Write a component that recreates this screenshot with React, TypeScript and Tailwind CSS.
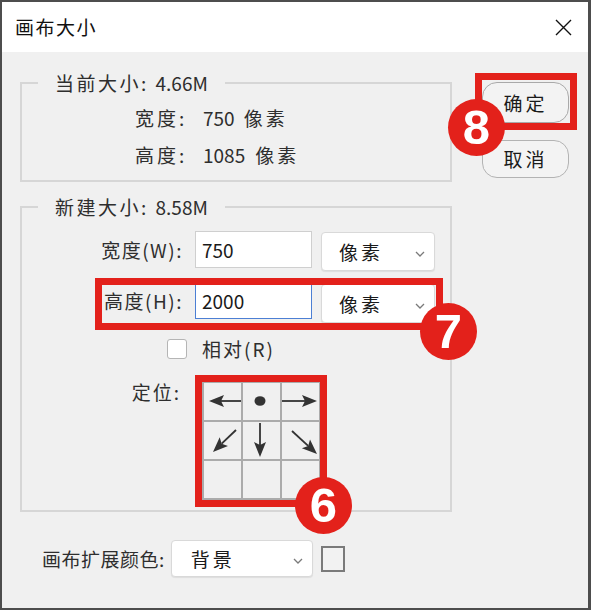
import React from "react"

function Arrow({ x1, y1, x2, y2 }: { x1: number; y1: number; x2: number; y2: number }) {
  const dx = x2 - x1
  const dy = y2 - y1
  const len = Math.hypot(dx, dy)
  const ux = dx / len
  const uy = dy / len
  const L = 15
  const W = 6
  const bx = x2 - ux * L
  const by = y2 - uy * L
  const nx = bx + ux * 3
  const ny = by + uy * 3
  const pts = `${x2},${y2} ${bx - uy * W},${by + ux * W} ${nx},${ny} ${bx + uy * W},${by - ux * W}`
  return (
    <svg width="37" height="37" viewBox="0 0 37 37">
      <line x1={x1} y1={y1} x2={nx} y2={ny} stroke="#333" strokeWidth="1.8" />
      <polygon points={pts} fill="#333" />
    </svg>
  )
}

const cells = [
  <Arrow key="l" x1={37} y1={18} x2={5} y2={18} />,
  <svg key="c" width="37" height="37" viewBox="0 0 37 37">
    <ellipse cx="17" cy="18" rx="5.5" ry="4.8" fill="#333" />
  </svg>,
  <Arrow key="r" x1={0} y1={18} x2={35} y2={18} />,
  <Arrow key="dl" x1={32} y1={8} x2={9} y2={30} />,
  <Arrow key="d" x1={17} y1={1} x2={17} y2={35} />,
  <Arrow key="dr" x1={10} y1={9} x2={35} y2={32} />,
  null,
  null,
  null,
]

function Chevron() {
  return (
    <svg width="10" height="6" viewBox="0 0 10 6" className="mt-[4px]">
      <path d="M1 1 L5 5 L9 1" fill="none" stroke="#7a7a7a" strokeWidth="1.3" />
    </svg>
  )
}

function Select({ value, className }: { value: string; className: string }) {
  return (
    <div
      className={`flex items-center justify-between bg-white border border-[#d9d9d9] rounded-[4px] shadow-[0_1px_1px_rgba(0,0,0,0.08)] pl-[17px] pr-[9px] ${className}`}
    >
      <span className="tracking-[3px] text-[#1a1a1a]">{value}</span>
      <Chevron />
    </div>
  )
}

function Badge({ n, className }: { n: string; className: string }) {
  return (
    <div
      className={`absolute w-[57px] h-[57px] rounded-full bg-[#e3211b] flex items-center justify-center text-white font-['Liberation_Sans',Arial,sans-serif] font-bold text-[49px] leading-none ${className}`}
    >
      {n}
    </div>
  )
}

export default function App() {
  return (
    <div className="relative w-[591px] h-[610px] overflow-hidden font-['Noto_Sans_CJK_SC',sans-serif] text-[19px] leading-[26px] text-[#2e2e2e]">
      <div className="flex flex-col w-full h-full border-2 border-r-[3px] border-[#4d4d4d] bg-[#f0f0f0]">
        <div className="h-[50px] shrink-0 bg-white flex items-center justify-between pl-[13px] pr-[16px]">
          <span className="tracking-[1.5px] text-[#111]">画布大小</span>
          <svg width="17" height="17" viewBox="0 0 17 17">
            <path d="M1 1 L16 16 M16 1 L1 16" stroke="#111" strokeWidth="1.4" />
          </svg>
        </div>

        <div className="flex">
          <div className="w-[450px] pl-[18px]">
            <fieldset className="mt-[18px] border-2 border-[#d6d6d6] pb-[7px]">
              <legend className="ml-[16px] px-[17px] tracking-[2.5px]">
                当前大小: <span className="tracking-normal">4.66M</span>
              </legend>
              <div className="pl-[113px] pt-[3px]">
                <div className="h-[37px] flex items-center">
                  <span className="w-[68px] tracking-[3px]">宽度:</span>
                  <span>750</span>
                  <span className="ml-[9px] tracking-[3px]">像素</span>
                </div>
                <div className="h-[37px] flex items-center">
                  <span className="w-[68px] tracking-[3px]">高度:</span>
                  <span>1085</span>
                  <span className="ml-[10px] tracking-[3px]">像素</span>
                </div>
              </div>
            </fieldset>

            <fieldset className="mt-[12px] border-2 border-[#d6d6d6] pb-[10px]">
              <legend className="ml-[16px] px-[17px] tracking-[2.5px]">
                新建大小: <span className="tracking-normal">8.58M</span>
              </legend>
              <div className="pt-[11px] flex flex-col">
                <div className="flex items-start gap-[12px]">
                  <span className="w-[161px] text-right mt-[6px] tracking-[1.5px]">宽度(W):</span>
                  <div className="w-[117px] h-[37px] bg-white border border-[#cfcfcf] flex items-center pl-[6px] text-[#1a1a1a]">
                    750
                  </div>
                  <Select value="像素" className="ml-[-3px] w-[114px] h-[39px] mt-[1px]" />
                </div>
                <div className="flex items-start gap-[12px] mt-[11px]">
                  <span className="w-[161px] text-right mt-[6px] tracking-[1.5px]">高度(H):</span>
                  <div className="w-[117px] h-[37px] bg-white border border-[#4c7fd4] flex items-center pl-[6px] text-[#1a1a1a]">
                    2000
                  </div>
                  <Select value="像素" className="ml-[-3px] w-[114px] h-[39px] mt-[2px]" />
                </div>
                <div className="flex items-center mt-[16px] pl-[145px] h-[20px]">
                  <div className="w-[20px] h-[20px] bg-white border border-[#b5b5b5] rounded-[3px]" />
                  <span className="ml-[15px] tracking-[2px]">相对(R)</span>
                </div>
                <div className="flex items-start gap-[19px] mt-[22px]">
                  <span className="w-[161px] text-right mt-[-2px] pr-[2px] tracking-[2px]">定位:</span>
                  <div className="grid grid-cols-[37px_37px_37px] gap-[2px] p-[2px] bg-[#ababab]">
                    {cells.map((c, i) => (
                      <div key={i} className="w-[37px] h-[37px] bg-[#f0f0f0]">
                        {c}
                      </div>
                    ))}
                  </div>
                </div>
              </div>
            </fieldset>
          </div>

          <div className="pl-[30px] pt-[30px] flex flex-col gap-[17px]">
            <button className="w-[87px] h-[41px] rounded-[15px] border border-[#a9a9a9] bg-[#f3f3f3] tracking-[3px] text-[#1a1a1a]">
              确定
            </button>
            <button className="w-[87px] h-[38px] rounded-[15px] border border-[#b3b3b3] bg-[#f3f3f3] tracking-[3px] text-[#1a1a1a]">
              取消
            </button>
          </div>
        </div>

        <div className="flex items-center pl-[40px] mt-[28px]">
          <span className="tracking-[0.5px]">画布扩展颜色:</span>
          <Select value="背景" className="ml-[6px] w-[142px] h-[37px] pl-[19px]" />
          <div className="ml-[8px] w-[24px] h-[26px] border-2 border-[#7a7a7a] bg-[#f2f2f2]" />
        </div>
      </div>

      <div className="absolute left-[475px] top-[73px] w-[102px] h-[57px] border-[7px] border-[#e3211b]" />
      <div className="absolute left-[95px] top-[278px] w-[348px] h-[52px] border-[7px] border-[#e3211b]" />
      <div className="absolute left-[195px] top-[375px] w-[132px] h-[132px] border-[7px] border-[#e3211b]" />
      <Badge n="8" className="left-[448px] top-[99px]" />
      <Badge n="7" className="left-[420px] top-[303px]" />
      <Badge n="6" className="left-[295px] top-[477px]" />
    </div>
  )
}
